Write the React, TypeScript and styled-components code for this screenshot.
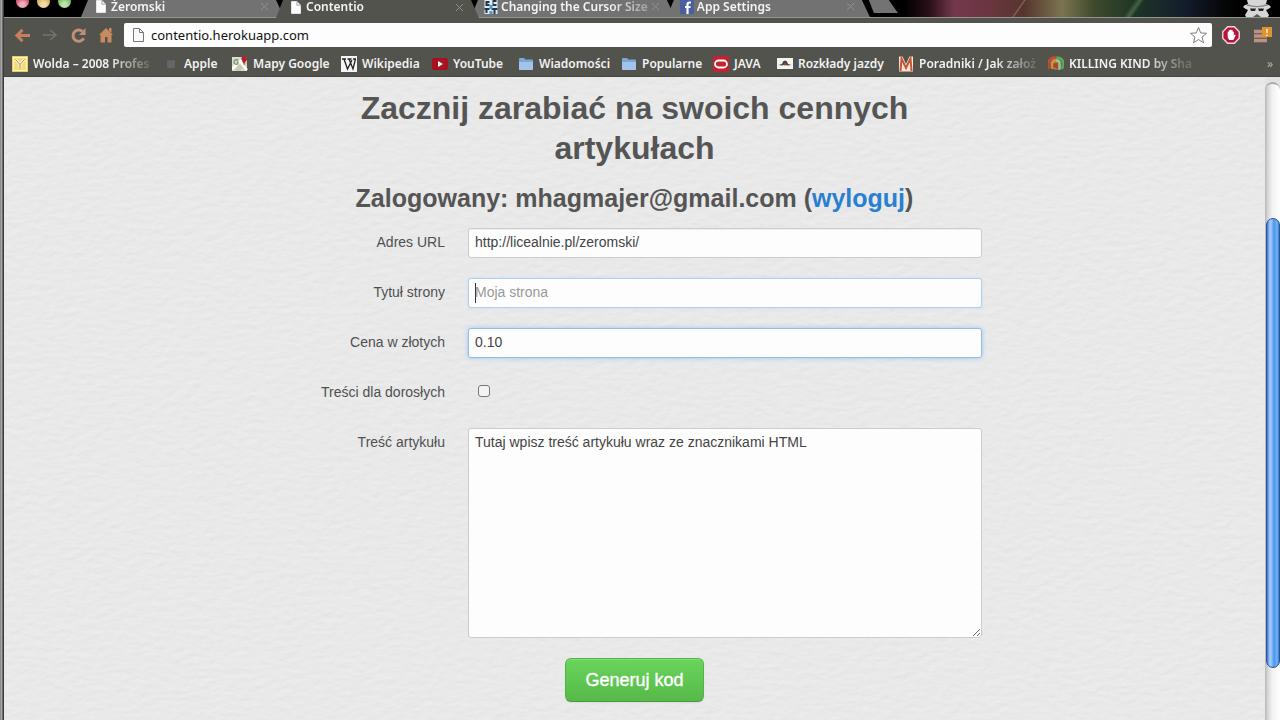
import React from 'react';
import styled, { createGlobalStyle } from 'styled-components';

const uiFont = `"Noto Sans", "DejaVu Sans", sans-serif`;
const pageFont = `"Liberation Sans", Arial, sans-serif`;

const GlobalStyle = createGlobalStyle`
  * { box-sizing: border-box; }
  body { margin: 0; background: #e7e7e7; }
  button { font: inherit; border: 0; padding: 0; background: none; }
`;

const Desktop = styled.div`
  display: flex;
  height: 100vh;
  overflow: hidden;
`;

const DesktopEdge = styled.div`
  flex: 0 0 4px;
  background: linear-gradient(90deg, #8d8d8d 0 1px, #a9a9a9 1px 2px, #6b6b6b 2px 3px, #3c3c3c 3px);
`;

const BrowserWindow = styled.div`
  flex: 1;
  min-width: 0;
  display: flex;
  flex-direction: column;
`;

const TabStrip = styled.header`
  display: flex;
  height: 18px;
  background:
    linear-gradient(#93938f, #93938f) 0 100% / 100% 1px no-repeat,
    linear-gradient(125deg, transparent 46%, rgba(190, 150, 130, 0.5) 48%, transparent 50%) 986px 0 / 60px 100% no-repeat,
    linear-gradient(125deg, transparent 42%, rgba(110, 140, 100, 0.5) 50%, transparent 56%) 1100px 0 / 60px 100% no-repeat,
    linear-gradient(90deg, #000 0 900px, #2a0f18 925px, #74384c 950px, #6b3640 985px, #56352f 1020px, #7b7450 1058px, #3f4a2c 1090px, #1e3626 1130px, #141d2c 1180px, #050608 1220px, #000 1240px);
`;

const Lights = styled.div`
  display: flex;
  gap: 8px;
  flex: 0 0 77px;
  padding-left: 12px;
`;

const Light = styled.button<{ $tone: string }>`
  width: 13px;
  height: 13px;
  margin-top: -5px;
  border-radius: 50%;
  background: radial-gradient(circle at 50% 75%, #fff8 0 20%, transparent 60%), ${(p) => p.$tone};
`;

const Tab = styled.div<{ $active?: boolean }>`
  position: relative;
  z-index: ${(p) => (p.$active ? 2 : 1)};
  flex: 0 0 203px;
  display: flex;
  align-items: center;
  gap: 3px;
  height: ${(p) => (p.$active ? 18 : 17)}px;
  margin-right: -8px;
  padding: 0 15px 0 13px;
  clip-path: polygon(7px 0, calc(100% - 8px) 0, 100% 100%, 0 100%);
  background: ${(p) => (p.$active ? '#52534c' : '#727272')};
`;

const TabIcon = styled.span`
  display: grid;
  place-items: center;
  flex: 0 0 14px;
  height: 13px;
  margin-bottom: 4px;
  svg { display: block; }
`;

const TabTitle = styled.span`
  flex: 1;
  min-width: 0;
  white-space: nowrap;
  margin-bottom: 4px;
  font: 600 12px/18px ${uiFont};
  color: #f4f4f4;
  mask-image: linear-gradient(90deg, #000 108px, #0006 142px);
`;

const CloseTab = styled.button`
  display: flex;
  margin-bottom: 4px;
  svg { display: block; }
`;

const NewTab = styled.button`
  width: 29px;
  height: 13px;
  margin-left: 7px;
  clip-path: polygon(0 0, 20px 0, 100% 100%, 5px 100%);
  background: #737373;
`;

const Incognito = styled.svg`
  margin-left: auto;
  margin-right: 7px;
  flex: none;
`;

const Toolbar = styled.nav`
  display: flex;
  align-items: center;
  height: 34px;
  padding: 0 3px 0 4px;
  background: #52534c;
`;

const ToolGroup = styled.div<{ $gap?: number }>`
  display: flex;
  gap: ${(p) => p.$gap ?? 0}px;
`;

const ToolButton = styled.button`
  display: grid;
  place-items: center;
  width: 28px;
  height: 24px;
  svg { display: block; }
`;

const AddressBar = styled.div`
  flex: 1;
  display: flex;
  align-items: center;
  gap: 7px;
  height: 24px;
  margin: 0 5px 0 4px;
  padding: 0 4px 0 9px;
  border-radius: 2px;
  background: #fdfdfd;
`;

const AddressInput = styled.input`
  flex: 1;
  min-width: 0;
  height: 22px;
  padding: 0;
  border: 0;
  outline: 0;
  background: none;
  font: 13px/20px ${uiFont};
  color: #111;
`;

const Bookmarks = styled.nav`
  display: flex;
  align-items: center;
  height: 25px;
  padding: 0 7px 1px 8px;
  border-bottom: 1px solid #45463f;
  background: #52534c;
`;

const Bookmark = styled.a<{ $width: number; $fade?: boolean }>`
  display: flex;
  align-items: center;
  gap: 5px;
  flex: 0 0 ${(p) => p.$width}px;
  height: 20px;
  white-space: nowrap;
  text-decoration: none;
  font: 600 12px/18px ${uiFont};
  color: #f2f2f2;
  mask-image: ${(p) => (p.$fade ? 'linear-gradient(90deg, #000 96px, #0003 136px)' : 'none')};
`;

const BookmarkIcon = styled.span`
  display: grid;
  place-items: center;
  flex: 0 0 16px;
  svg { display: block; }
`;

const More = styled.button`
  margin-left: auto;
  font: 12px/12px ${uiFont};
  color: #b4b4ae;
`;

const Viewport = styled.div`
  flex: 1;
  min-height: 0;
  display: flex;
`;

const Page = styled.main`
  position: relative;
  flex: 1;
  min-width: 0;
  overflow: hidden;
  padding: 11px 20px 18px;
  background: #e7e7e7;
  font: 14px/20px ${pageFont};
  color: #505050;
`;

const Paper = styled.svg`
  position: absolute;
  inset: 0;
  width: 100%;
  height: 100%;
`;

const Container = styled.div`
  position: relative;
  max-width: 695px;
  margin: 0 auto;
`;

const Title = styled.h1`
  margin: 0 0 10px;
  text-align: center;
  font-size: 32px;
  line-height: 40px;
  color: #555;
`;

const Account = styled.h2`
  margin: 0 0 10px;
  text-align: center;
  font-size: 25px;
  line-height: 40px;
  color: #555;
  a { color: #2a80d0; text-decoration: none; }
`;

const Form = styled.form`
  display: grid;
  gap: 20px;
`;

const Row = styled.div`
  display: grid;
  grid-template-columns: 158px 1fr;
  column-gap: 23px;
  align-items: start;
  min-height: 30px;
`;

const Label = styled.label`
  padding-top: 4px;
  text-align: right;
`;

const fieldStyle = `
  display: block;
  width: 100%;
  padding: 3px 6px 5px;
  border-radius: 3px;
  outline: 0;
  background-color: #fdfdfd;
  font: 14px/20px ${pageFont};
  color: #444;
`;

const Field = styled.input<{ $glow?: 'soft' | 'strong'; $caret?: boolean }>`
  ${fieldStyle}
  height: 30px;
  border: 1px solid ${(p) => (p.$glow === 'strong' ? '#93bde6' : p.$glow ? '#b3cfea' : '#ccc')};
  box-shadow: ${(p) => (p.$glow === 'strong' ? '0 0 5px #9cc6ee' : p.$glow ? '0 0 3px #c3dbf2' : 'inset 0 1px 1px #00000010')};
  ${(p) => p.$caret && 'background-image: linear-gradient(#333, #333); background-size: 1px 20px; background-position: 6px 4px; background-repeat: no-repeat;'}
  &::placeholder { color: #999; opacity: 1; }
`;

const Check = styled.input`
  appearance: none;
  width: 12px;
  height: 12px;
  margin: 7px 0 0 10px;
  border: 1px solid #777;
  border-radius: 3px;
  background: #f3f3f3;
`;

const Area = styled.textarea`
  ${fieldStyle}
  height: 210px;
  border: 1px solid #ccc;
  resize: both;
`;

const Submit = styled.button`
  justify-self: center;
  height: 44px;
  padding: 0 19px;
  border: 1px solid #54b247;
  border-bottom-color: #479a3c;
  border-radius: 6px;
  background: linear-gradient(#68d55b, #57b94a);
  box-shadow: inset 0 1px 0 #ffffff33, 0 1px 2px #0000000d;
  font: 18px/24px ${pageFont};
  color: #fff;
  -webkit-text-stroke: 0.4px #fff;
`;

const Scrollbar = styled.div`
  flex: 0 0 15px;
  display: flex;
  flex-direction: column;
  padding-top: 5px;
  background: #e2e2e2;
`;

const Track = styled.div`
  flex: 1;
  padding-top: 134px;
  border-top: 2px solid #aaa;
  border-radius: 8px 8px 0 0;
  background: linear-gradient(90deg, #b8b8b8, #d8d8d8 3px, #f1f1f1 7px, #fff);
`;

const Thumb = styled.div`
  height: 450px;
  margin-left: 1px;
  border: 1px solid #26539b;
  border-radius: 7px;
  background: linear-gradient(90deg, #3a72cf, #a9d0fa 3px, #86b9f5 5px, #4c94ea 7px, #70b5f5 10px, #3e7fc6);
`;

const DocIcon = ({ white }: { white?: boolean }) => (
  <svg width={white ? 10 : 11} height={white ? 13 : 14} viewBox="0 0 11 14" fill={white ? '#fff' : '#fafafa'} stroke={white ? '#eee' : '#777'}>
    <path d="M.5 .5H6.500L10.500 4.500V13.500H.5Z" />
    <path d="M6.500 .5V4.500H10.500" fill="none" stroke={white ? '#999' : '#777'} />
  </svg>
);

const IbcIcon = () => (
  <svg width="14" height="14" viewBox="0 0 13 14">
    <rect width="13" height="14" fill="#dfe9f1" />
    <path d="M1 1h4v2H3v1h2v2H1zM8 0h4v2H9v2h3v2H8zM0 8h5v2H3v3H1v-3H0zM7 8h6v2h-2v4H9v-4H7z" fill="#243446" />
    <path d="M5 5h3v4H5zM5 11h3v3H5z" fill="#4d9ad0" />
  </svg>
);

const FbIcon = () => (
  <svg width="14" height="14" viewBox="0 0 14 14">
    <rect width="14" height="14" fill="#4a5f9c" />
    <path d="M11 2.500H9.500q-2 0-2 2V14M5 7h5.500" stroke="#fff" strokeWidth="2.200" fill="none" />
  </svg>
);

const Cross = () => (
  <svg width="9" height="9" viewBox="0 0 9 9" stroke="#8f8f8f" fill="none">
    <path d="M1 1l7 7M8 1L1 8" />
  </svg>
);

const FolderIcon = () => (
  <svg width="16" height="14" viewBox="0 0 16 14">
    <path d="M1 2q0-1 1-1h4l1.500 1.500H14q1 0 1 1V12q0 1-1 1H2q-1 0-1-1Z" fill="#7ea6d2" />
    <path d="M1 5h14v7q0 1-1 1H2q-1 0-1-1Z" fill="#a3c4e8" />
  </svg>
);

const icons: Record<string, React.ReactNode> = {
  wolda: (
    <svg width="16" height="16" viewBox="0 0 16 16">
      <rect width="16" height="16" fill="#e5cb62" />
      <rect x="1.500" y="1.500" width="13" height="13" fill="#f1dc86" stroke="#fff3b8" />
      <path d="M3.500 3.500L8 8.500L12.500 3.500M8 8.500V13" stroke="#fffbe4" strokeWidth="2.500" fill="none" />
      <path d="M3.500 3.500L8 8.500L12.500 3.500M8 8.500V13" stroke="#b08c28" fill="none" />
    </svg>
  ),
  apple: (
    <svg width="12" height="12" viewBox="0 0 12 12">
      <path d="M2 2.500q2.500-1 4 0 2.500-1 4 0V9q-2 2-4 1-2 1-4-1Z" fill="#65666a" />
    </svg>
  ),
  maps: (
    <svg width="16" height="15" viewBox="0 0 16 15">
      <rect y="1" width="15" height="14" fill="#dcdccb" />
      <path d="M9 1h6v7L8 15H3Z" fill="#c3cfae" />
      <path d="M0 13L13 1M8 6l7 8" stroke="#fff" strokeWidth="2.500" />
      <path d="M6 4.500A2.300 2.300 0 1 0 6 7.500V6H4.500" stroke="#6d8a70" fill="none" strokeWidth="1.200" />
      <path d="M12 10Q11.500 6 10 4.500a2.800 2.800 0 1 1 4.500 0Q12.500 6 12 10Z" fill="#b51f2c" />
    </svg>
  ),
  wiki: (
    <svg width="16" height="16" viewBox="0 0 16 16">
      <rect width="16" height="16" fill="#f5f5f5" />
      <path d="M1 3h4M6.500 3h4M12 3h3M3 3l3.500 10L11 4M8 3l4 10L14.500 3" stroke="#222" strokeWidth="1.300" fill="none" />
    </svg>
  ),
  youtube: (
    <svg width="16" height="14" viewBox="0 0 16 14">
      <rect y="1" width="16" height="12" rx="2" fill="#a8121f" />
      <path d="M6 4l5 3-5 3Z" fill="#fff" />
    </svg>
  ),
  folder: <FolderIcon />,
  java: (
    <svg width="16" height="16" viewBox="0 0 16 16">
      <rect width="16" height="16" fill="#c8202f" />
      <rect x="2" y="4.500" width="12" height="7" rx="3.500" fill="none" stroke="#fff" strokeWidth="1.800" />
    </svg>
  ),
  trains: (
    <svg width="16" height="11" viewBox="0 0 16 11">
      <rect width="16" height="11" fill="#f3f3f3" />
      <path d="M1.500 7l3.500-1L6 3.500 8 2.500l2 1 1 2.500 3.500 1-4 .5L8 6.500 5 7.500Z" fill="#444" />
      <path d="M7.200 5h1.600v2.500H7.200z" fill="#b33" />
    </svg>
  ),
  guide: (
    <svg width="16" height="16" viewBox="0 0 16 16">
      <path d="M1 15.500V.5h3.500L8 8 11.500.5H15v15Z" fill="#fbe3d0" />
      <path d="M2.500 15L3.500 2.500 8 12l4.500-9.500 1 12.500" fill="none" stroke="#c2553a" strokeWidth="2" />
    </svg>
  ),
  killing: (
    <svg width="16" height="16" viewBox="0 0 17 16" fill="none" strokeWidth="2.800">
      <circle cx="8.500" cy="8" r="6" fill="#7d9a52" />
      <path d="M2 13A7 7 0 0 1 9 1.500" stroke="#c84a36" />
      <path d="M9 1.500A6.500 6.500 0 0 1 14 13" stroke="#61a84f" />
      <path d="M4.500 13V8a4 4 0 0 1 4-4" stroke="#d98c3c" />
      <path d="M8.500 4a4 4 0 0 1 3.500 4v6" stroke="#8fc9a4" />
      <path d="M7 12V8.500L9.500 8V13" stroke="#b5402f" />
    </svg>
  ),
};

const bookmarks = [
  { icon: 'wolda', text: 'Wolda – 2008 Profes', width: 151, fade: true },
  { icon: 'apple', text: 'Apple', width: 69 },
  { icon: 'maps', text: 'Mapy Google', width: 109 },
  { icon: 'wiki', text: 'Wikipedia', width: 91 },
  { icon: 'youtube', text: 'YouTube', width: 86 },
  { icon: 'folder', text: 'Wiadomości', width: 103 },
  { icon: 'folder', text: 'Popularne', width: 92 },
  { icon: 'java', text: 'JAVA', width: 64 },
  { icon: 'trains', text: 'Rozkłady jazdy', width: 121 },
  { icon: 'guide', text: 'Poradniki / Jak założ', width: 150, fade: true },
  { icon: 'killing', text: 'KILLING KIND by Sha', width: 151, fade: true },
];

const tabs = [
  { icon: <DocIcon white />, text: 'Żeromski' },
  { icon: <DocIcon white />, text: 'Contentio', active: true },
  { icon: <IbcIcon />, text: 'Changing the Cursor Size' },
  { icon: <FbIcon />, text: 'App Settings' },
];

export default function App() {
  return (
    <Desktop>
      <GlobalStyle />
      <DesktopEdge />
      <BrowserWindow>
        <TabStrip>
          <Lights>
            <Light $tone="#d8506e" aria-label="Close" />
            <Light $tone="#dfae4c" aria-label="Minimize" />
            <Light $tone="#6fbf52" aria-label="Zoom" />
          </Lights>
          {tabs.map((t) => (
            <Tab key={t.text} $active={t.active}>
              <TabIcon>{t.icon}</TabIcon>
              <TabTitle>{t.text}</TabTitle>
              <CloseTab aria-label="Close tab"><Cross /></CloseTab>
            </Tab>
          ))}
          <NewTab aria-label="New tab" />
          <Incognito width="32" height="17" viewBox="0 0 32 17">
            <path d="M6 0h20l-1 4q4 1 5 3-2 2-5 3l3 5-1 2H5l-1-2 3-5Q4 9 2 7q1-2 5-3Z" fill="#d6d6d6" />
            <path d="M6 4q10 4 20 0l1 1.500Q16 9 5 5.500Z" fill="#8a8a8a" />
            <path d="M9 8.500h6l-1 2.500h-4ZM17 8.500h6l-1 2.500h-4Z" fill="#222" />
            <path d="M12 17l4-3 4 3Z" fill="#555" />
          </Incognito>
        </TabStrip>
        <Toolbar>
          <ToolGroup>
            <ToolButton aria-label="Back">
              <svg width="17" height="15" viewBox="0 0 18 16" fill="none" stroke="#c4805f" strokeWidth="3.200">
                <path d="M9 2L3 8l6 6M3 8h14" />
              </svg>
            </ToolButton>
            <ToolButton aria-label="Forward">
              <svg width="16" height="14" viewBox="0 0 16 14" fill="none" stroke="#73746c" strokeWidth="1.500">
                <path d="M8 2l6 5-6 5M1 7h12" />
              </svg>
            </ToolButton>
            <ToolButton aria-label="Reload">
              <svg width="17" height="17" viewBox="0 0 18 18" fill="none" stroke="#c08f78" strokeWidth="3.200">
                <path d="M14.500 12A6 6 0 1 1 13 4.500" />
                <path d="M16.500 1v7.500H9.500Z" fill="#c08f78" stroke="none" />
              </svg>
            </ToolButton>
            <ToolButton aria-label="Home">
              <svg width="16" height="16" viewBox="0 0 16 16" fill="#c88a5e">
                <path d="M8 1l7 7h-1.500v7.500H9.500V10H7v5.500H2.500V8H1Z" />
                <path d="M11 1h2.500v5L11 4Z" />
              </svg>
            </ToolButton>
          </ToolGroup>
          <AddressBar>
            <DocIcon />
            <AddressInput aria-label="Address" defaultValue="contentio.herokuapp.com" />
            <svg width="19" height="18" viewBox="0 0 20 19" fill="#fff" stroke="#777">
              <path d="M10 1.500l2.300 5.800 6.200.4-4.800 4 1.600 6L10 14.300l-5.300 3.400 1.600-6-4.800-4 6.200-.4Z" />
            </svg>
          </AddressBar>
          <ToolGroup $gap={4}>
            <ToolButton aria-label="Adblock">
              <svg width="18" height="18" viewBox="0 0 19 19">
                <path d="M6 .8h7L18.200 6v7L13 18.200H6L.8 13V6Z" fill="#b5153a" stroke="#f0d5da" strokeWidth="1.500" />
                <path d="M6 9V6h1.200V4.500h1.300V4H10v.5h1.300V6h1.200v4l1-1 1 .8-2.500 5H7.500L6 12Z" fill="#fff" />
              </svg>
            </ToolButton>
            <ToolButton aria-label="Menu">
              <svg width="20" height="19" viewBox="0 0 20 19">
                <path d="M1 5.500h13M1 10h13M1 14.500h13" stroke="#bd9380" strokeWidth="3.400" />
                <rect x="9" y="1" width="10" height="10" fill="#e0932a" />
                <path d="M14 3v4M14 8.500V10" stroke="#fff4d8" strokeWidth="1.500" />
              </svg>
            </ToolButton>
          </ToolGroup>
        </Toolbar>
        <Bookmarks>
          {bookmarks.map((b) => (
            <Bookmark key={b.text} href="#" $width={b.width} $fade={b.fade}>
              <BookmarkIcon>{icons[b.icon]}</BookmarkIcon>
              {b.text}
            </Bookmark>
          ))}
          <More aria-label="More bookmarks">»</More>
        </Bookmarks>
        <Viewport>
          <Page>
            <Paper aria-hidden="true">
              <filter id="grain" x="0" y="0" width="100%" height="100%">
                <feTurbulence type="fractalNoise" baseFrequency="0.09 0.18" numOctaves="3" seed="4" />
                <feDiffuseLighting surfaceScale="0.35" diffuseConstant="1.060" lightingColor="#e9e9e9">
                  <feDistantLight azimuth="250" elevation="70" />
                </feDiffuseLighting>
              </filter>
              <rect width="100%" height="100%" filter="url(#grain)" />
            </Paper>
            <Container>
              <Title>Zacznij zarabiać na swoich cennych artykułach</Title>
              <Account>Zalogowany: mhagmajer@gmail.com (<a href="#">wyloguj</a>)</Account>
              <Form onSubmit={(e) => e.preventDefault()}>
                <Row>
                  <Label htmlFor="url">Adres URL</Label>
                  <Field id="url" defaultValue="http://licealnie.pl/zeromski/" />
                </Row>
                <Row>
                  <Label htmlFor="title">Tytuł strony</Label>
                  <Field id="title" placeholder="Moja strona" $glow="soft" $caret />
                </Row>
                <Row>
                  <Label htmlFor="price">Cena w złotych</Label>
                  <Field id="price" defaultValue="0.10" $glow="strong" />
                </Row>
                <Row>
                  <Label htmlFor="adult">Treści dla dorosłych</Label>
                  <Check id="adult" type="checkbox" />
                </Row>
                <Row>
                  <Label htmlFor="body">Treść artykułu</Label>
                  <Area id="body" defaultValue="Tutaj wpisz treść artykułu wraz ze znacznikami HTML" />
                </Row>
                <Submit type="submit">Generuj kod</Submit>
              </Form>
            </Container>
          </Page>
          <Scrollbar>
            <Track>
              <Thumb />
            </Track>
          </Scrollbar>
        </Viewport>
      </BrowserWindow>
    </Desktop>
  );
}
